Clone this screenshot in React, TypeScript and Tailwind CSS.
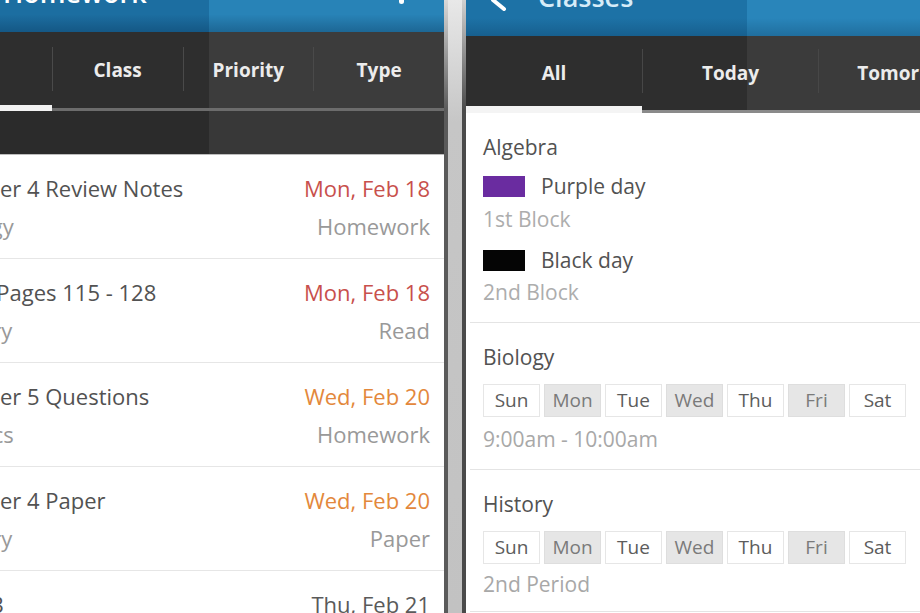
import React from "react";

const homework = [
  { title: "Chapter 4 Review Notes", cls: "Biology", date: "Mon, Feb 18", type: "Homework", color: "text-[#c8504c]" },
  { title: "Read Pages 115 - 128", cls: "History", date: "Mon, Feb 18", type: "Read", color: "text-[#c8504c]" },
  { title: "Chapter 5 Questions", cls: "Physics", date: "Wed, Feb 20", type: "Homework", color: "text-[#e3883c]" },
  { title: "Chapter 4 Paper", cls: "History", date: "Wed, Feb 20", type: "Paper", color: "text-[#e3883c]" },
  { title: "Quiz 3", cls: "Biology", date: "Thu, Feb 21", type: "Quiz", color: "text-[#5a5a5a]" },
];

const days = [
  { d: "Sun", on: false },
  { d: "Mon", on: true },
  { d: "Tue", on: false },
  { d: "Wed", on: true },
  { d: "Thu", on: false },
  { d: "Fri", on: true },
  { d: "Sat", on: false },
];

function DayRow() {
  return (
    <div className="flex gap-[4px]">
      {days.map((x) => (
        <div
          key={x.d}
          className={
            x.on
              ? "w-[57px] h-[33px] flex items-center justify-center border border-[#dedede] bg-[#e6e6e6] text-[19px] text-[#7a7a7a]"
              : "w-[57px] h-[33px] flex items-center justify-center border border-[#e6e6e6] bg-white text-[19px] text-[#5c5c5c]"
          }
        >
          {x.d}
        </div>
      ))}
    </div>
  );
}

function LeftTab({ label, selected, first }: { label: string; selected?: boolean; first?: boolean }) {
  return (
    <div className="flex-1 flex flex-col">
      <div className="flex-1 flex items-center">
        {first ? null : <div className="w-px h-[44px] bg-[#4a4a4a]" />}
        <div className="flex-1 text-center text-[19px] font-bold text-[#ececec] pt-[4px]">{label}</div>
      </div>
      {selected ? (
        <div className="h-[6px] bg-[#f2f2f2]" />
      ) : (
        <div className="h-[6px] flex flex-col justify-end">
          <div className="h-[3px] bg-[#6c6c6c]" />
        </div>
      )}
    </div>
  );
}

function RightTab({ label, selected, first }: { label: string; selected?: boolean; first?: boolean }) {
  return (
    <div className="w-[176px] shrink-0 flex flex-col">
      <div className="flex-1 flex items-center">
        {first ? null : <div className="w-px h-[44px] bg-[#474747]" />}
        <div className="flex-1 text-center text-[19px] font-bold text-[#ececec] pt-[4px]">{label}</div>
      </div>
      {selected ? (
        <div className="h-[7px] bg-[#f4f4f4]" />
      ) : (
        <div className="h-[7px] flex flex-col justify-end">
          <div className="h-[3px] bg-[#8a8a8a]" />
        </div>
      )}
    </div>
  );
}

export default function App() {
  return (
    <div className="w-[920px] h-[613px] overflow-hidden flex bg-white font-['Open_Sans','Liberation_Sans',sans-serif]">
      {/* Left phone: Homework */}
      <div className="w-[444px] h-full overflow-hidden shrink-0">
        <div className="w-[523px] -ml-[79px]">
          <div className="h-[32px] flex bg-[linear-gradient(180deg,rgba(0,0,0,0)_45%,rgba(0,30,60,0.28)_100%),linear-gradient(90deg,#1c6ea1_0%,#1c6ea1_55%,#2883b7_55%,#2883b7_100%)]">
            <span className="ml-[82px] -mt-[24px] text-[27px] leading-[34px] font-semibold text-white whitespace-nowrap">Homework</span>
            <div className="ml-auto mr-[40px] w-[5px] h-[4px] rounded-b-full bg-white" />
          </div>
          <div className="h-[79px] flex bg-[linear-gradient(90deg,#2e2e2e_0%,#2e2e2e_55%,#3c3c3c_55%,#3c3c3c_100%)]">
            <LeftTab label="All" selected first />
            <LeftTab label="Class" />
            <LeftTab label="Priority" />
            <LeftTab label="Type" />
          </div>
          <div className="h-[44px] bg-[linear-gradient(90deg,#2b2b2b_0%,#2b2b2b_55%,#383838_55%,#383838_100%)] border-b border-[#bdbdbd]" />
          <div className="flex flex-col">
            {homework.map((h) => (
              <div key={h.title} className="h-[104px] shrink-0 border-b border-[#e6e6e6] pl-[18px] pr-[14px] flex flex-col justify-center gap-[10px]">
                <div className="flex justify-between items-baseline">
                  <span className="text-[22px] leading-[28px] text-[#525252] whitespace-nowrap">{h.title}</span>
                  <span className={"text-[22px] leading-[28px] whitespace-nowrap " + h.color}>{h.date}</span>
                </div>
                <div className="flex justify-between items-baseline">
                  <span className="text-[22px] leading-[28px] text-[#999999] whitespace-nowrap">{h.cls}</span>
                  <span className="text-[22px] leading-[28px] text-[#999999] whitespace-nowrap">{h.type}</span>
                </div>
              </div>
            ))}
          </div>
        </div>
      </div>

      {/* Divider between the two phones */}
      <div className="w-[4px] h-full bg-[linear-gradient(180deg,#d8d8d8_0%,#5a5a5a_18%,#5a5a5a_100%)] shrink-0" />
      <div className="w-[14px] h-full bg-[linear-gradient(180deg,#e8e8e8_0%,#c6c6c6_20%,#c2c2c2_100%)] shrink-0" />
      <div className="w-[4px] h-full bg-[linear-gradient(180deg,#d0d0d0_0%,#4a4a4a_18%,#4a4a4a_100%)] shrink-0" />

      {/* Right phone: Classes */}
      <div className="flex-1 h-full overflow-hidden">
        <div className="h-[36px] flex bg-[linear-gradient(180deg,rgba(0,0,0,0)_50%,rgba(0,30,60,0.22)_100%),linear-gradient(90deg,#1d72a6_0%,#1d72a6_62%,#2985ba_62%,#2985ba_100%)]">
          <svg className="ml-[22px] -mt-[12px] shrink-0" width="20" height="24" viewBox="0 0 20 24">
            <path d="M16 3 L5 12 L16 21" fill="none" stroke="#ffffff" strokeWidth="4" strokeLinecap="round" strokeLinejoin="round" />
          </svg>
          <span className="ml-[30px] -mt-[20px] text-[27px] leading-[34px] font-semibold text-[#d6ecf8] whitespace-nowrap">Classes</span>
        </div>
        <div className="h-[77px] flex overflow-hidden bg-[linear-gradient(90deg,#2e2e2e_0%,#2e2e2e_62%,#3b3b3b_62%,#3b3b3b_100%)]">
          <RightTab label="All" selected first />
          <RightTab label="Today" />
          <RightTab label="Tomorrow" />
        </div>

        <div className="ml-[4px]">
          {/* Algebra */}
          <div className="pl-[13px] pr-[13px] pt-[22px] pb-[17px] border-b border-[#e4e4e4]">
            <div className="text-[21px] leading-[24px] font-medium text-[#525252]">Algebra</div>
            <div className="mt-[13px] flex items-center h-[28px]">
              <div className="w-[42px] h-[21px] bg-[#6a2ca0]" />
              <span className="ml-[16px] text-[21px] leading-[28px] text-[#525252]">Purple day</span>
            </div>
            <div className="mt-[6px] text-[21px] leading-[26px] text-[#adadad]">1st Block</div>
            <div className="mt-[14px] flex items-center h-[28px]">
              <div className="w-[42px] h-[21px] bg-[#050505]" />
              <span className="ml-[16px] text-[21px] leading-[28px] text-[#525252]">Black day</span>
            </div>
            <div className="mt-[5px] text-[21px] leading-[26px] text-[#adadad]">2nd Block</div>
          </div>

          {/* Biology */}
          <div className="pl-[13px] pr-[13px] pt-[22px] pb-[18px] border-b border-[#e4e4e4]">
            <div className="text-[21px] leading-[24px] font-medium text-[#525252]">Biology</div>
            <div className="mt-[15px]">
              <DayRow />
            </div>
            <div className="mt-[10px] text-[21px] leading-[24px] text-[#a8a8a8]">9:00am - 10:00am</div>
          </div>

          {/* History */}
          <div className="pl-[13px] pr-[13px] pt-[22px] pb-[15px] border-b border-[#e4e4e4]">
            <div className="text-[21px] leading-[24px] font-medium text-[#525252]">History</div>
            <div className="mt-[15px]">
              <DayRow />
            </div>
            <div className="mt-[8px] text-[21px] leading-[24px] text-[#a8a8a8]">2nd Period</div>
          </div>
        </div>
      </div>
    </div>
  );
}
